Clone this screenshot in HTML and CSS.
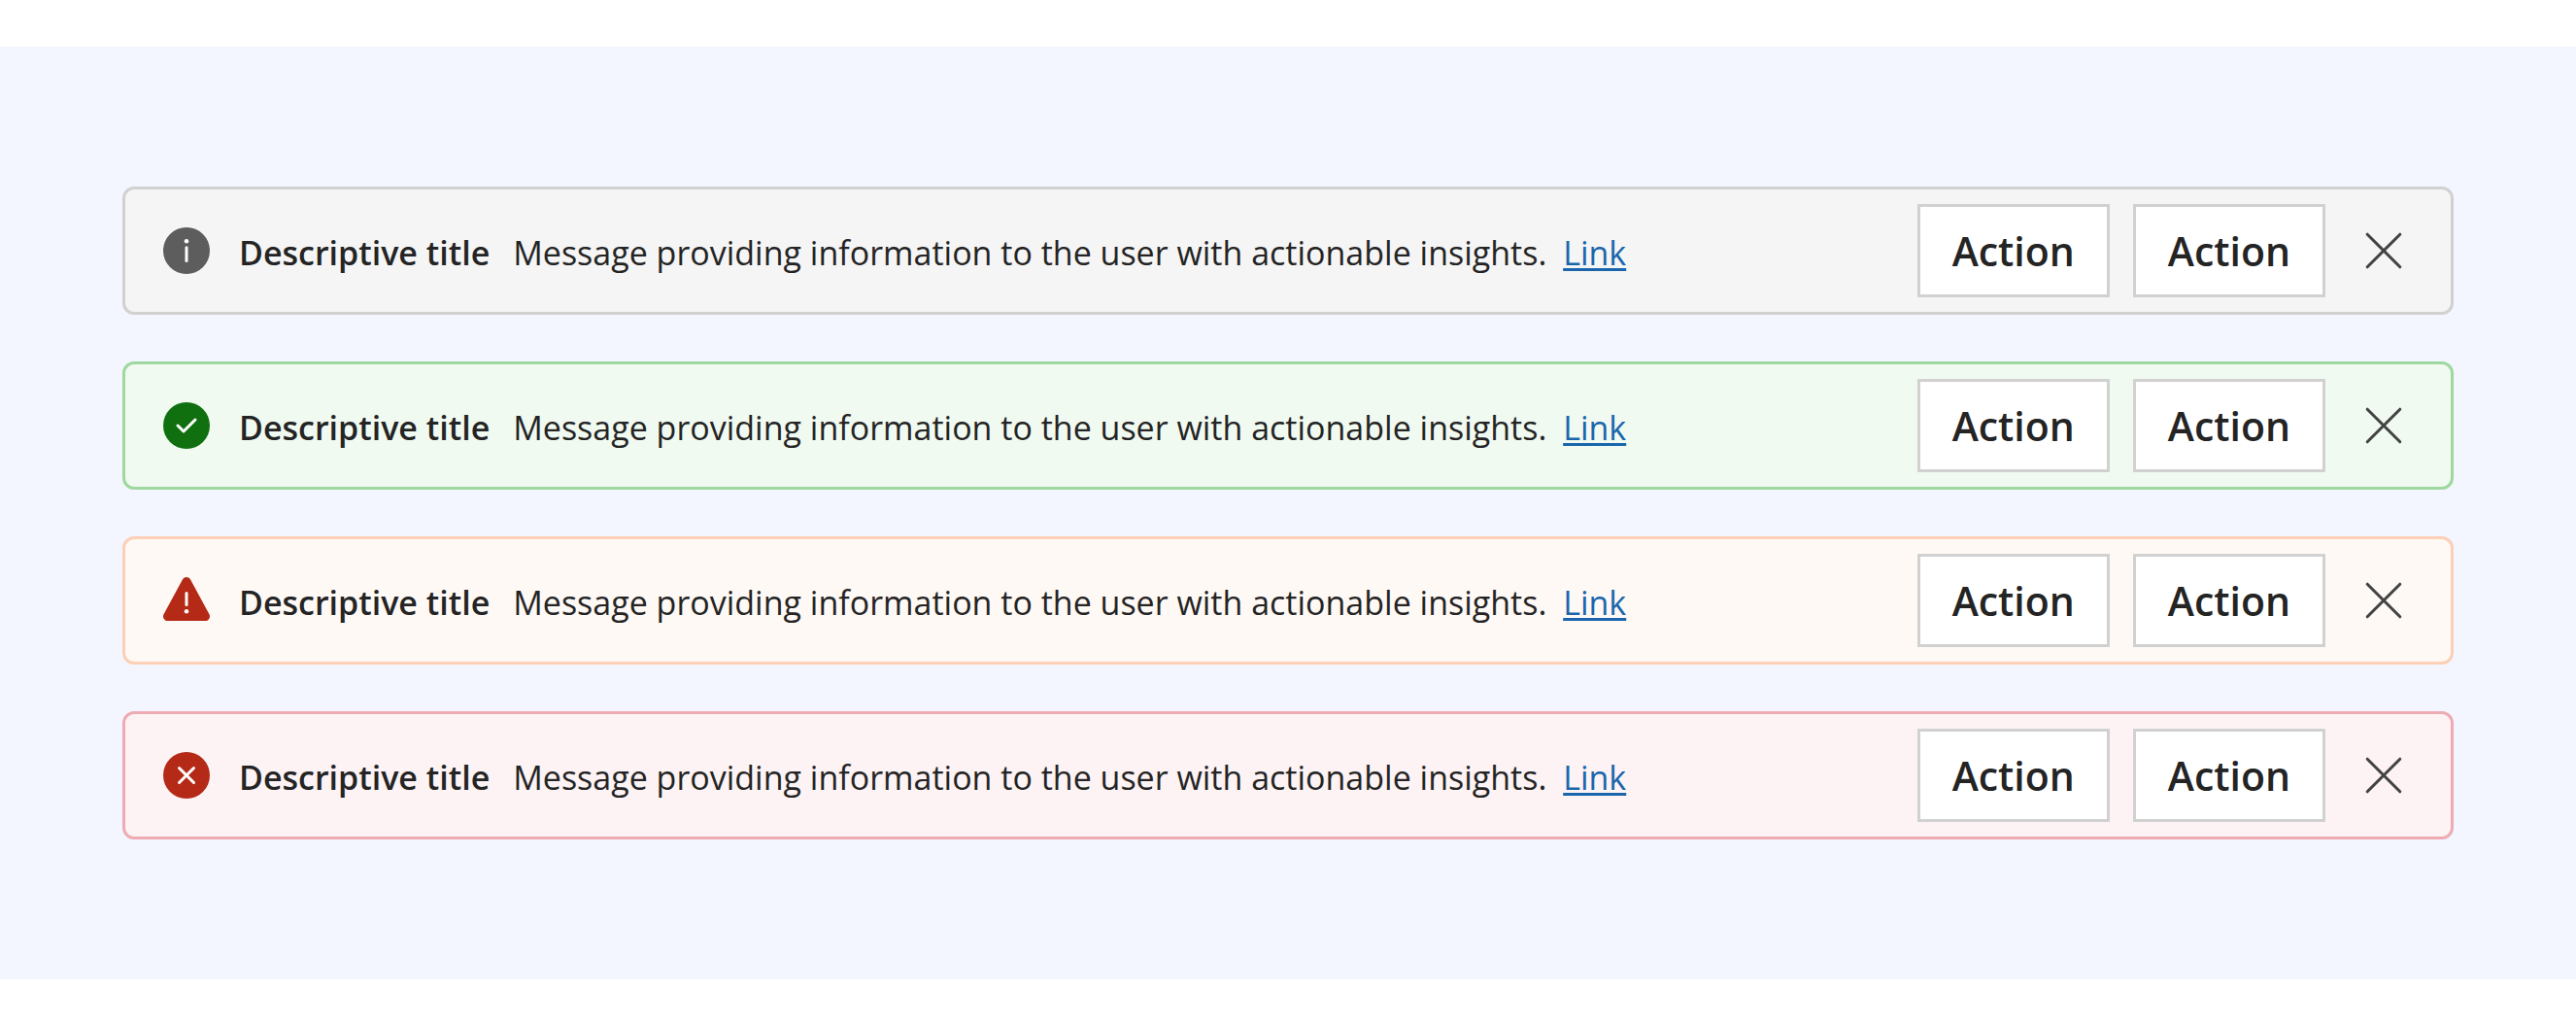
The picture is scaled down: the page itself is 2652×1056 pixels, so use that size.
FILE: index.html
```html
<!DOCTYPE html>
<html lang="en">
    <head>
        <meta charset="UTF-8" />
        <meta name="viewport" content="width=device-width, initial-scale=1.0" />
        <title>Message bars</title>

        <link rel="stylesheet" href="styles.css">
    </head>
    <body>
        <main class="board">
            <div class="bar info" role="status">
                <svg class="icon" viewBox="0 0 20 20" aria-hidden="true">
                    <circle cx="10" cy="10" r="8" fill="currentColor" />
                    <circle class="mark-fill" cx="10" cy="6.75" r="0.75" />
                    <path class="mark" d="M10 8.9v4.6" />
                </svg>
                <div class="text">
                    <b>Descriptive title</b>
                    <span>Message providing information to the user with actionable insights. <a href="#">Link</a></span>
                </div>
                <div class="actions">
                    <button type="button" class="action">Action</button>
                    <button type="button" class="action">Action</button>
                </div>
                <button type="button" class="close" aria-label="Close">
                    <svg class="icon" viewBox="0 0 20 20"><path d="M4.4 4.4l11.2 11.2M15.6 4.4L4.4 15.6" /></svg>
                </button>
            </div>

            <div class="bar success" role="status">
                <svg class="icon" viewBox="0 0 20 20" aria-hidden="true">
                    <circle cx="10" cy="10" r="8" fill="currentColor" />
                    <path class="mark" d="M7 10l2 2 4-4" />
                </svg>
                <div class="text">
                    <b>Descriptive title</b>
                    <span>Message providing information to the user with actionable insights. <a href="#">Link</a></span>
                </div>
                <div class="actions">
                    <button type="button" class="action">Action</button>
                    <button type="button" class="action">Action</button>
                </div>
                <button type="button" class="close" aria-label="Close">
                    <svg class="icon" viewBox="0 0 20 20"><path d="M4.4 4.4l11.2 11.2M15.6 4.4L4.4 15.6" /></svg>
                </button>
            </div>

            <div class="bar warning" role="status">
                <svg class="icon" viewBox="0 0 20 20" aria-hidden="true">
                    <path fill="currentColor" d="M8.68 2.79a1.5 1.5 0 0 1 2.64 0l6.5 12A1.5 1.5 0 0 1 16.5 17h-13a1.5 1.5 0 0 1-1.32-2.21l6.5-12z" />
                    <path class="mark" d="M10 7.5v4" />
                    <circle class="mark-fill" cx="10" cy="13.75" r="0.75" />
                </svg>
                <div class="text">
                    <b>Descriptive title</b>
                    <span>Message providing information to the user with actionable insights. <a href="#">Link</a></span>
                </div>
                <div class="actions">
                    <button type="button" class="action">Action</button>
                    <button type="button" class="action">Action</button>
                </div>
                <button type="button" class="close" aria-label="Close">
                    <svg class="icon" viewBox="0 0 20 20"><path d="M4.4 4.4l11.2 11.2M15.6 4.4L4.4 15.6" /></svg>
                </button>
            </div>

            <div class="bar error" role="alert">
                <svg class="icon" viewBox="0 0 20 20" aria-hidden="true">
                    <circle cx="10" cy="10" r="8" fill="currentColor" />
                    <path class="mark" d="M7.5 7.5l5 5M12.5 7.5l-5 5" />
                </svg>
                <div class="text">
                    <b>Descriptive title</b>
                    <span>Message providing information to the user with actionable insights. <a href="#">Link</a></span>
                </div>
                <div class="actions">
                    <button type="button" class="action">Action</button>
                    <button type="button" class="action">Action</button>
                </div>
                <button type="button" class="close" aria-label="Close">
                    <svg class="icon" viewBox="0 0 20 20"><path d="M4.4 4.4l11.2 11.2M15.6 4.4L4.4 15.6" /></svg>
                </button>
            </div>
        </main>
    </body>
</html>
```

FILE: styles.css
```css
body {
    margin: 0px;
    padding: 48px 0px;
    font-family: "Open Sans", "Noto Sans", sans-serif;
    background-color: #ffffff;
    color: #242424;
}

.board {
    padding: 144px 126px;
    display: flex;
    flex-direction: column;
    row-gap: 48px;
    background-color: #f3f6ff;
}

.bar {
    display: flex;
    align-items: center;
    padding: 15px 21px 15px 33px;
    border: 3px solid;
    border-radius: 12px;
}

.icon {
    display: block;
    flex: none;
    width: 60px;
    height: 60px;
}

.mark {
    fill: none;
    stroke: #ffffff;
    stroke-linecap: round;
    stroke-linejoin: round;
}

.mark-fill {
    fill: #ffffff;
}

.text {
    flex: 1;
    display: flex;
    column-gap: 24px;
    margin-left: 24px;
    padding-top: 4px;
    font-size: 34px;
    line-height: 48px;
}

.text b {
    font-weight: 600;
}

.text a {
    margin-left: 8px;
    color: #1a66ad;
    text-decoration-thickness: 3px;
    text-underline-offset: 3px;
    text-decoration-skip-ink: none;
}

.actions {
    display: flex;
    column-gap: 24px;
}

.action {
    height: 96px;
    padding: 0px 33px;
    border: 3px solid #d1d1d1;
    background-color: #ffffff;
    color: #242424;
    font-family: inherit;
    font-size: 41px;
    font-weight: 600;
}

.close {
    display: flex;
    justify-content: center;
    align-items: center;
    width: 96px;
    height: 96px;
    margin-left: 12px;
    padding: 0px;
    border: none;
    background: none;
    color: #424242;
}

.close path {
    fill: none;
    stroke: currentColor;
    stroke-width: 1;
    stroke-linecap: round;
}

/* Bar types, the icon takes its colour from svg color */
.info {
    background-color: #f5f5f5;
    border-color: #d1d1d1;
}

.info > .icon {
    color: #5d5d5d;
}

.success {
    background-color: #f1faf1;
    border-color: #9fd89f;
}

.success > .icon {
    color: #107010;
}

.warning {
    background-color: #fff9f5;
    border-color: #fdcfb4;
}

.warning > .icon,
.error > .icon {
    color: #b52a17;
}

.error {
    background-color: #fdf3f4;
    border-color: #eeacb2;
}
```
